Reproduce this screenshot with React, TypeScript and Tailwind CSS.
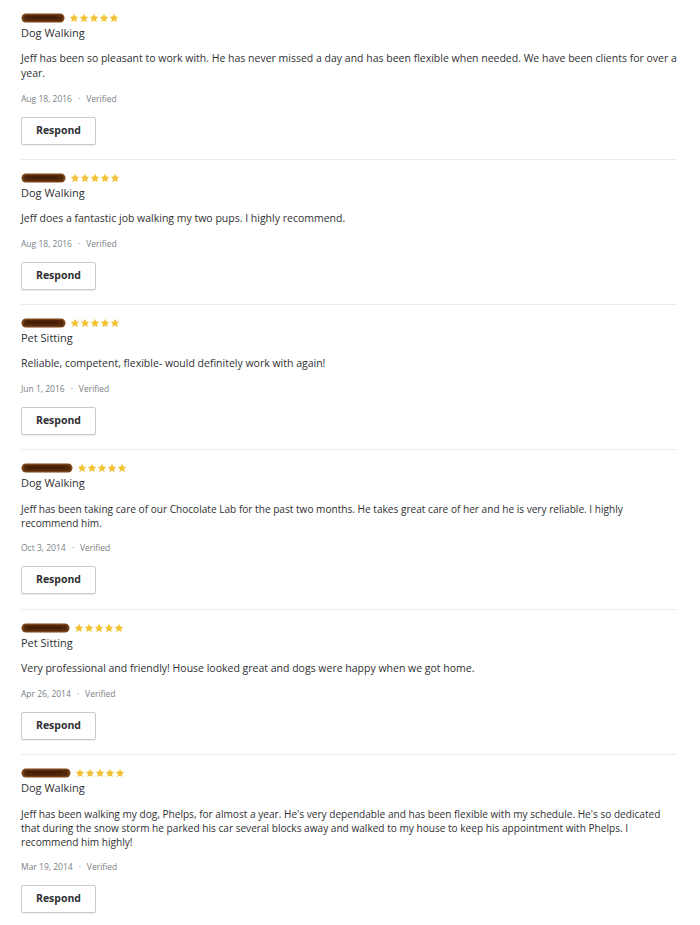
import React from 'react';

interface Review {
  blob: number;
  service: string;
  text: string;
  date: string;
  compact?: boolean;
}

const reviews: Review[] = [
  {
    blob: 44,
    service: 'Dog Walking',
    text: 'Jeff has been so pleasant to work with. He has never missed a day and has been flexible when needed. We have been clients for over a year.',
    date: 'Aug 18, 2016',
  },
  {
    blob: 45,
    service: 'Dog Walking',
    text: 'Jeff does a fantastic job walking my two pups. I highly recommend.',
    date: 'Aug 18, 2016',
  },
  {
    blob: 45,
    service: 'Pet Sitting',
    text: 'Reliable, competent, flexible- would definitely work with again!',
    date: 'Jun 1, 2016',
  },
  {
    blob: 52,
    service: 'Dog Walking',
    text: 'Jeff has been taking care of our Chocolate Lab for the past two months. He takes great care of her and he is very reliable. I highly recommend him.',
    date: 'Oct 3, 2014',
    compact: true,
  },
  {
    blob: 49,
    service: 'Pet Sitting',
    text: 'Very professional and friendly! House looked great and dogs were happy when we got home.',
    date: 'Apr 26, 2014',
  },
  {
    blob: 50,
    service: 'Dog Walking',
    text: "Jeff has been walking my dog, Phelps, for almost a year. He's very dependable and has been flexible with my schedule. He's so dedicated that during the snow storm he parked his car several blocks away and walked to my house to keep his appointment with Phelps. I recommend him highly!",
    date: 'Mar 19, 2014',
    compact: true,
  },
];

const Star = () => (
  <svg width="10" height="10" viewBox="0 0 24 24" className="shrink-0">
    <path
      d="M12 1.8l3.1 6.6 7.2.9-5.3 5 1.4 7.1L12 17.9l-6.4 3.5 1.4-7.1-5.3-5 7.2-.9z"
      fill="#f3c134"
    />
  </svg>
);

// redacted reviewer name, drawn as a brown marker smudge
const NameBlob = ({ width }: { width: number }) => (
  <svg width={width} height="12" viewBox={`0 0 ${width} 12`} className="shrink-0">
    <rect x="0.5" y="1.5" width={width - 1} height="9" rx="4.5" fill="#7a4418" />
    <rect x="2.5" y="3" width={width - 5} height="6" rx="3" fill="#55290b" />
    <rect x="6" y="4.5" width={width - 14} height="2" rx="1" fill="#3e1c06" />
  </svg>
);

const ReviewItem = ({ review, last }: { review: Review; last: boolean }) => (
  <div
    className={
      last
        ? 'pt-[12px] pb-4'
        : review.compact
          ? 'pt-[12px] pb-[15px] border-b border-[#ebebeb]'
          : 'pt-[12px] pb-[14px] border-b border-[#ebebeb]'
    }
  >
    <div className="flex items-center gap-[4px] h-[12px]">
      <NameBlob width={review.blob} />
      <div className="flex items-center">
        <Star />
        <Star />
        <Star />
        <Star />
        <Star />
      </div>
    </div>
    <div className="mt-[1px] text-[11px] leading-[15px] text-[#2f3033]">{review.service}</div>
    {review.compact ? (
      <p className="mt-[12px] text-[10.1px] leading-[14px] text-[#2f3033]">{review.text}</p>
    ) : (
      <p className="mt-[11px] text-[10.5px] leading-[15px] text-[#2f3033]">{review.text}</p>
    )}
    <div className="mt-[12px] flex items-center text-[8.5px] leading-[12px] text-[#7a7f85]">
      <span>{review.date}</span>
      <span className="mx-[6px]">·</span>
      <span>Verified</span>
    </div>
    <button
      type="button"
      className="mt-[12px] w-[75px] h-[28px] border border-[#c9cbcd] rounded-[2px] bg-white text-[10.5px] font-bold text-[#2f3033] shadow-[0_1px_1px_rgba(0,0,0,0.08)]"
    >
      Respond
    </button>
  </div>
);

export default function App() {
  return (
    <div
      className="bg-white min-h-[925px] w-[700px] pl-[21px] pr-[23px]"
      style={{ fontFamily: '"Open Sans", Lato, sans-serif' }}
    >
      {reviews.map((r, i) => (
        <ReviewItem key={i} review={r} last={i === reviews.length - 1} />
      ))}
    </div>
  );
}
